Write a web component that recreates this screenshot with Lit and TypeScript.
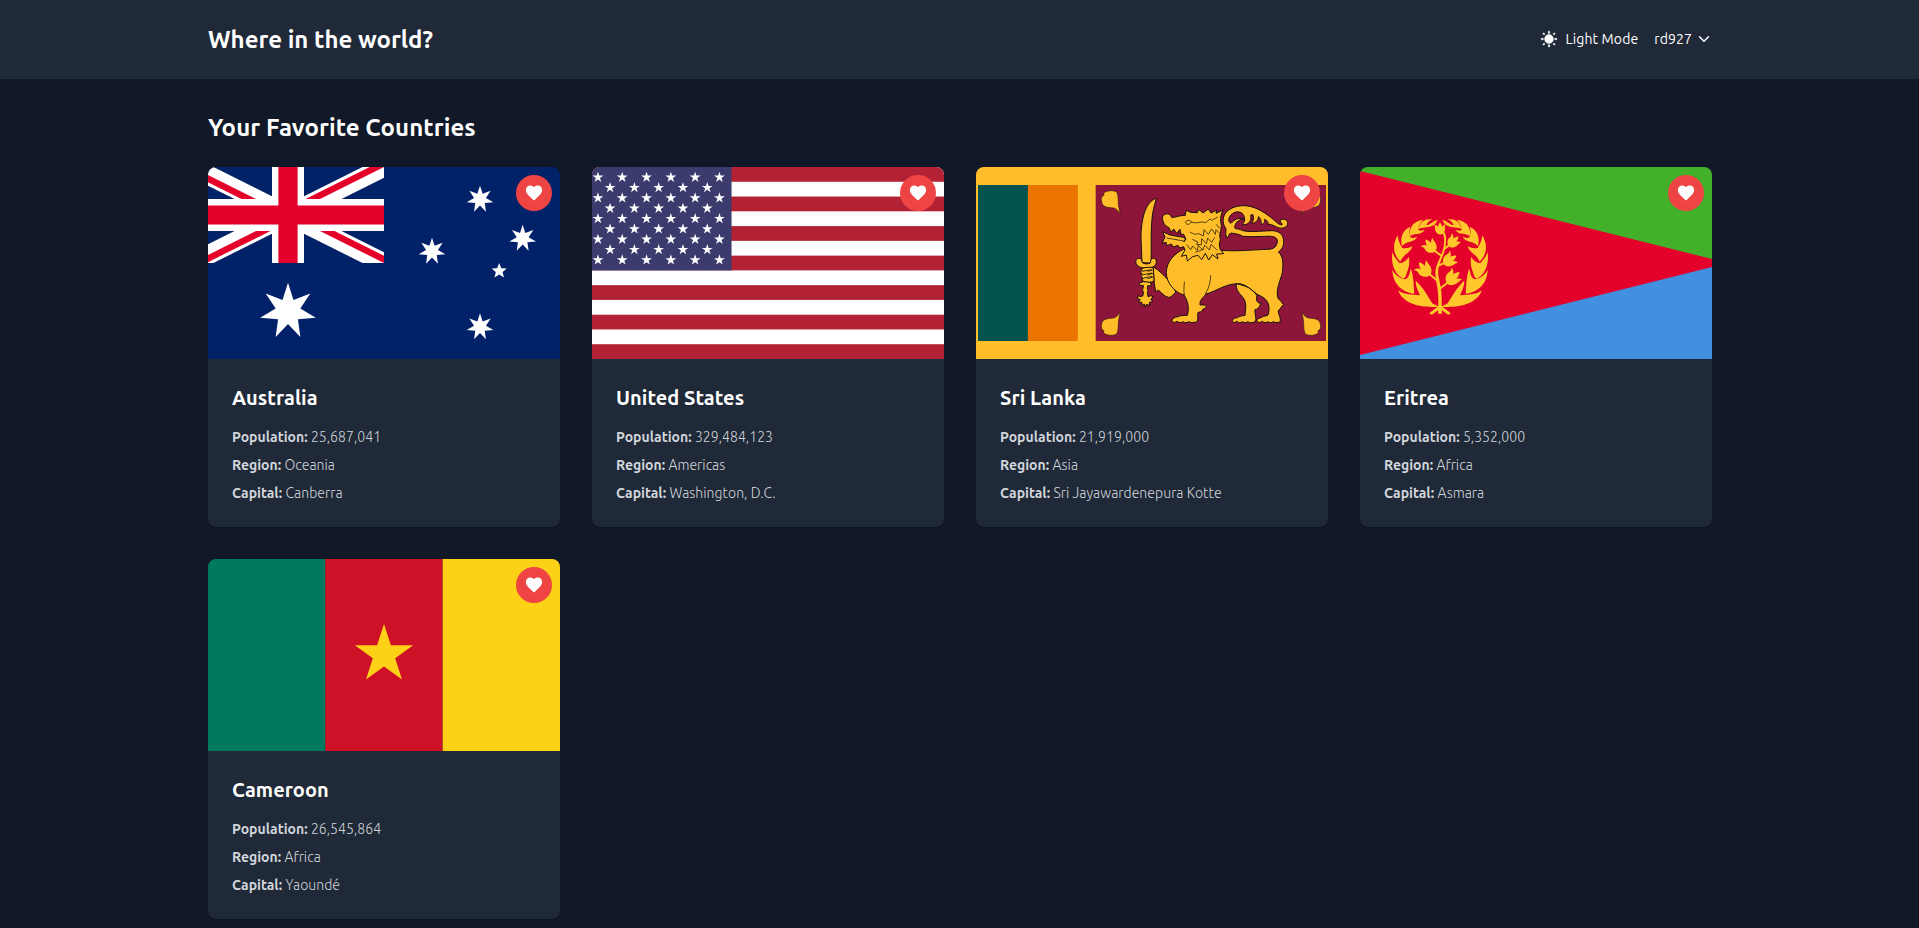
import { LitElement, html, css, svg, SVGTemplateResult } from "lit";
import { customElement, property } from "lit/decorators.js";

/** Points of a regular star polygon whose first tip points up. */
function starPoints(cx: number, cy: number, r: number, tips = 5, ratio = 0.382): string {
  const pts: string[] = [];
  for (let i = 0; i < tips * 2; i++) {
    const rad = i % 2 ? r * ratio : r;
    const a = (Math.PI * i) / tips - Math.PI / 2;
    pts.push(`${(cx + rad * Math.cos(a)).toFixed(2)},${(cy + rad * Math.sin(a)).toFixed(2)}`);
  }
  return pts.join(" ");
}

/* All flags are drawn on a 1056 x 576 canvas. */

const australia = svg`
  <rect width="1056" height="576" fill="#012169"/>
  <g transform="translate(-48 0)">
    <clipPath id="canton"><path d="M0 0h576v288H0z"/></clipPath>
    <clipPath id="quarters"><path d="M288 144h288v144zv144H0zH0V0zV0h288z"/></clipPath>
    <g clip-path="url(#canton)">
      <path d="M0 0L576 288M576 0L0 288" stroke="#fff" stroke-width="57.6"/>
      <path d="M0 0L576 288M576 0L0 288" stroke="#e4002b" stroke-width="38.4" clip-path="url(#quarters)"/>
      <path d="M288 0v288M0 144h576" stroke="#fff" stroke-width="96"/>
      <path d="M288 0v288M0 144h576" stroke="#e4002b" stroke-width="57.6"/>
    </g>
    <g fill="#fff">
      <polygon points=${starPoints(288, 433, 85.5, 7, 0.444)}/>
      <polygon points=${starPoints(864, 97, 41, 7, 0.444)}/>
      <polygon points=${starPoints(720, 253, 41, 7, 0.444)}/>
      <polygon points=${starPoints(992, 214.5, 41, 7, 0.444)}/>
      <polygon points=${starPoints(864, 480, 41, 7, 0.444)}/>
      <polygon points=${starPoints(921.6, 312, 24, 5, 0.444)}/>
    </g>
  </g>`;

const usStars: string[] = [];
for (let row = 0; row < 9; row++) {
  const count = row % 2 ? 5 : 6;
  for (let i = 0; i < count; i++) {
    usStars.push(starPoints(17.8 + (row % 2 ? 36.4 : 0) + i * 72.9, 31 + row * 31, 17));
  }
}

const unitedStates = svg`
  <rect width="1056" height="576" fill="#fff"/>
  ${[0, 2, 4, 6, 8, 10, 12].map(
    (i) => svg`<rect y=${(i * 576) / 13} width="1056" height=${576 / 13} fill="#b22234"/>`
  )}
  <rect width="418.6" height="310.2" fill="#3c3b6e"/>
  ${usStars.map((p) => svg`<polygon points=${p} fill="#fff"/>`)}`;

const leaf =
  "M401 99C414 90 429 91 440 96C447 110 443 130 447 145L451 164C444 149 437 144 425 143C413 143 403 140 398 134C393 124 393 114 397 109L402 106Z";

const sriLanka = svg`
  <rect width="1056" height="576" fill="#ffbe29"/>
  <rect x="6" y="54" width="150" height="468" fill="#00534e"/>
  <rect x="155.500" y="54" width="150" height="468" fill="#eb7400"/>
  <rect x="359" y="54" width="691" height="468" fill="#8d153a"/>
  <g transform="translate(-18 -21)" fill="#ffbe29" stroke="#17100c" stroke-width="3" stroke-linejoin="round">
    <g stroke-width="1.500">
      <path d=${leaf}/>
      <path d=${leaf} transform="matrix(1 0 0 -1 0 618)"/>
      <path d=${leaf} transform="matrix(-1 0 0 1 1446 0)"/>
      <path d=${leaf} transform="matrix(-1 0 0 -1 1446 618)"/>
    </g>
    <path d="M549 320C568 331 583 347 594 360L618 396C610 402 607 409 599 412C588 413 578 402 566 391C562 390 561 394 557 395L553 370Z"/>
    <path d="M799 370C797 388 806 398 815 408C826 420 828 430 827 444L825 466C812 468 806 469 803 473C792 473 786 479 787 485C791 488 796 488 800 484C806 489 812 489 816 485C822 489 828 489 833 485C841 490 848 489 857 484C860 472 853 460 855 449C862 449 865 441 869 440C867 436 874 432 873 430C861 430 857 420 861 407L845 385Z"/>
    <path d="M640 268C615 280 589 304 589 338C589 370 615 397 642 405C655 424 658 446 652 466C638 467 631 466 625 470C612 471 604 478 606 485C611 488 616 488 621 484C627 489 634 489 639 485C645 489 651 489 656 485C663 489 673 488 682 485C685 474 682 465 684 457C694 457 699 451 699 447C706 447 706 440 710 438C705 434 698 435 690 435C688 420 700 413 708 402C738 394 764 373 800 371C826 371 845 389 861 403C882 411 897 423 897 444C897 457 896 463 892 467C883 467 877 470 874 473C863 474 858 481 862 485C867 489 872 488 877 484C882 489 888 489 893 485C899 489 905 489 910 485C917 489 925 488 931 485C933 470 923 461 925 451C932 448 932 441 941 433C932 428 935 421 925 417C915 393 931 362 937 338C940 315 941 289 925 276C935 269 942 258 941 243C940 223 927 213 907 212C880 212 850 217 823 213C812 211 808 205 799 207C790 204 795 195 799 188C806 180 813 178 822 177C805 171 792 180 783 190C770 184 777 165 792 158C806 152 818 158 821 166C826 176 825 184 817 194C836 196 846 182 842 166L848 163C853 172 850 183 845 190C858 189 866 180 865 170C874 176 874 187 873 193C882 192 886 187 883 178C892 180 896 188 894 194C904 190 912 199 925 203C941 208 954 200 953 188C951 177 936 174 930 182C931 189 938 189 936 195C923 194 911 177 894 166C870 148 846 137 820 137C796 138 779 144 766 160C756 174 758 194 768 206C768 216 765 223 771 234C778 229 774 222 784 219C795 222 807 221 818 229C842 231 866 229 887 229C909 227 923 232 922 244C921 258 913 268 893 268C855 269 800 275 752 271Z"/>
    <path d="M646 166L648 151L662 157L682 158L686 148L699 159L715 147L723 159L740 150L738 160L760 150C752 162 752 173 752 184L754 197L752 214L749 225L751 239L748 252L750 267L761 281L740 282L744 297L727 284L716 300L706 280L695 299L684 286L668 290L652 303L649 285L634 289L645 270L641 260L629 264L624 256L610 261L604 252L591 257L588 247L576 250L585 231L578 215L600 225L640 232C646 237 648 241 641 244L648 238L641 223L632 222L630 208L620 220L611 207L603 217L597 203C583 197 576 184 578 170C584 158 600 159 603 170C607 177 620 167 646 166Z"/>
    <g fill="none" stroke-width="2.200">
      <path d="M646 187C652 178 664 180 664 187C658 194 650 196 646 187ZM664 186C680 193 694 182 707 188L720 177L725 181L743 171M590 234L630 241L645 244M660 216L674 223L686 221L700 228L702 209L715 223L725 207L736 223L738 209L748 219M667 238L684 246L679 253L694 254L695 236L709 251L713 234L725 247L734 232M650 254L662 269L668 258L682 271L685 256L698 270L704 255L718 270L723 253L742 271M739 193L748 205M676 277L700 268"/>
      <path d="M643 405C640 390 643 377 643 365M722 346C722 366 716 386 706 402M800 371C828 370 845 391 861 404"/>
    </g>
    <path d="M559 115C529 124 513 170 513 236L516 308L543 309C545 265 540 190 551 145Z"/>
    <path d="M504 318C494 309 496 297 506 295C517 295 514 304 517 308C524 313 536 313 542 308C540 297 549 292 557 297C562 309 557 318 546 322C532 326 512 325 504 318Z"/>
    <path d="M514 326C525 322 540 320 550 324L552 362C542 370 526 368 516 361L518 354L512 348L517 342L511 336L516 331Z"/>
    <path d="M516 334L545 329M516 345L546 339M517 355L547 349M532 334L548 330M532 345L549 340M532 356L549 351" fill="none" stroke-width="2.500"/>
    <path d="M520 365L507 370L510 377L520 376C522 385 514 389 520 395L519 407L512 410L504 407L503 416L511 419L504 426L516 427L515 436L524 433L526 442L530 433L540 437L538 427L549 425L542 418L550 411L543 407L534 410L532 397C538 391 529 386 533 377L543 378V369L534 366Z"/>
  </g>`;

/** A three-pointed olive bud, base at (x, y), turned by the given angle. */
const bud = (x: number, y: number, angle: number, s = 1) => svg`
  <path transform=${`translate(${x} ${y}) rotate(${angle}) scale(${s})`}
    d="M-3 3C-15 -1 -21 -13 -18 -24C-18 -29 -21 -33 -23 -36C-13 -34 -8 -30 -7 -25C-6 -31 -3 -38 1 -43C5 -37 8 -31 8 -24C11 -29 14 -32 21 -34C18 -27 19 -21 18 -15C16 -4 9 2 3 3Z"/>`;

const wreathHalf = svg`
  <path d="M266 440C216 444 160 434 144 391C160 404 183 404 210 406C203 391 197 379 197 362C220 382 234 410 247 430Z"/>
  <path d="M193 401C157 397 128 372 127 329C136 345 146 353 165 358C178 353 178 340 182 326C191 346 191 373 193 401Z"/>
  <path d="M160 356C137 346 122 316 127 277C133 292 141 300 149 310C162 307 171 301 176 290C183 315 171 334 166 352Z"/>
  <path d="M151 305C129 283 126 254 143 226C145 241 149 253 157 264C168 266 178 264 187 259C183 279 160 281 151 305Z"/>
  <path d="M156 259C150 232 157 211 181 200C177 211 178 223 181 232C189 235 196 234 202 229C195 250 168 241 156 259Z"/>
  <path d="M180 229C176 204 190 182 219 180C210 190 206 199 205 209C211 214 218 212 224 208C215 229 194 217 180 229Z"/>
  <path d="M206 206C211 185 224 175 247 178C238 183 232 188 229 195C240 195 246 184 263 179C254 205 230 199 206 206Z"/>
  <path d="M266 438L238 459L245 465L270 446Z"/>`;

const eritrea = svg`
  <rect width="1056" height="288" fill="#43b02a"/>
  <rect y="288" width="1056" height="288" fill="#418fde"/>
  <path d="M-48 0L1104 288L-48 576z" fill="#e4002b"/>
  <g transform="translate(-30 -21)" fill="#ffc72c">
    ${wreathHalf}
    <g transform="matrix(-1 0 0 1 540 0)">${wreathHalf}</g>
    <path d="M264 461L265 425C266 396 260 376 257 350C251 318 274 294 280 264C284 243 284 228 276 217L282 214C291 229 289 246 286 265C280 292 261 317 265 346C272 380 276 398 275 425L276 461Z"/>
    <path d="M262 362L238 342M270 385L296 366M263 318L285 308M275 288L252 271M284 266L300 254" fill="none" stroke="#ffc72c" stroke-width="6"/>
    ${bud(236, 344, -40, 1.1)}
    ${bud(252, 273, -38, 1)}
    ${bud(271, 221, -3, 0.8)}
    ${bud(299, 257, 42, 0.9)}
    ${bud(284, 311, 54, 1)}
    ${bud(294, 368, 46, 1.1)}
  </g>`;

const cameroon = svg`
  <rect width="352" height="576" fill="#007a5e"/>
  <rect x="352" width="352" height="576" fill="#ce1126"/>
  <rect x="704" width="352" height="576" fill="#fcd116"/>
  <polygon points=${starPoints(528, 287, 92)} fill="#fcd116"/>`;

interface Country {
  name: string;
  population: string;
  region: string;
  capital: string;
  flag: SVGTemplateResult;
}

const countries: Country[] = [
  { name: "Australia", population: "25,687,041", region: "Oceania", capital: "Canberra", flag: australia },
  { name: "United States", population: "329,484,123", region: "Americas", capital: "Washington, D.C.", flag: unitedStates },
  { name: "Sri Lanka", population: "21,919,000", region: "Asia", capital: "Sri Jayawardenepura Kotte", flag: sriLanka },
  { name: "Eritrea", population: "5,352,000", region: "Africa", capital: "Asmara", flag: eritrea },
  { name: "Cameroon", population: "26,545,864", region: "Africa", capital: "Yaoundé", flag: cameroon },
];

@customElement("country-card")
export class CountryCard extends LitElement {
  @property({ attribute: false }) country!: Country;

  static styles = css`
    :host {
      display: block;
      position: relative;
      overflow: hidden;
      border-radius: 8px;
      background: #1f2937;
      box-shadow: 0 1px 3px rgb(0 0 0 / 0.1), 0 1px 2px -1px rgb(0 0 0 / 0.1);
    }
    .flag {
      display: block;
      width: 100%;
      height: 192px;
    }
    .like {
      position: absolute;
      top: 8px;
      right: 8px;
      display: flex;
      padding: 8px;
      border: 0;
      border-radius: 50%;
      background: #ef4444;
      color: #fff;
    }
    .heart {
      display: block;
      width: 20px;
      height: 20px;
    }
    .body {
      padding: 25px 24px 24px;
    }
    .name {
      margin: 0 0 15px;
      font-size: 20px;
      line-height: 28px;
      font-weight: 600;
      letter-spacing: 0.04px;
      color: #fff;
    }
    .facts {
      display: grid;
      gap: 8px;
      margin: 0;
      font-size: 14px;
      line-height: 20px;
      font-weight: 300;
      letter-spacing: 0.04px;
      color: #d1d5db;
    }
    .fact {
      white-space: nowrap;
    }
    .label {
      display: inline;
      font-weight: 600;
      letter-spacing: 0;
    }
    .value {
      display: inline;
      margin: 0;
    }
  `;

  private fact(label: string, value: string) {
    return html`<div class="fact"><dt class="label">${label}:</dt> <dd class="value">${value}</dd></div>`;
  }

  render() {
    const c = this.country;
    return html`
      <svg class="flag" viewBox="0 0 1056 576" preserveAspectRatio="none" role="img" aria-label=${c.name}>${c.flag}</svg>
      <button class="like" aria-pressed="true">
        <svg class="heart" viewBox="0 0 512 512" fill="currentColor">
          <path d="M256 448l-30.164-27.211C118.718 322.442 48 258.61 48 179.095 48 114.221 97.918 64 162.4 64c36.399 0 70.717 16.742 93.6 43.947C278.882 80.742 313.199 64 349.6 64 414.082 64 464 114.221 464 179.095c0 79.516-70.719 143.348-177.836 241.694L256 448z"/>
        </svg>
      </button>
      <div class="body">
        <h3 class="name">${c.name}</h3>
        <dl class="facts">
          ${this.fact("Population", c.population)} ${this.fact("Region", c.region)} ${this.fact("Capital", c.capital)}
        </dl>
      </div>
    `;
  }
}

@customElement("app-root")
export class AppRoot extends LitElement {
  static styles = css`
    :host {
      display: block;
      min-height: 100vh;
      background: #111827;
      color: #fff;
      font-family: Ubuntu, "Noto Sans", "Open Sans", sans-serif;
    }
    .header {
      background: #1f2937;
      box-shadow: 0 1px 2px rgb(0 0 0 / 0.05);
    }
    .container {
      box-sizing: border-box;
      max-width: 1536px;
      margin: 0 auto;
      padding: 0 15.5px 0 16.5px;
    }
    .bar {
      display: flex;
      align-items: center;
      justify-content: space-between;
      height: 79px;
    }
    .title {
      margin: 0;
      font-size: 24px;
      line-height: 32px;
      font-weight: 600;
    }
    .section {
      letter-spacing: 0.08px;
    }
    .actions {
      display: flex;
      align-items: center;
      gap: 16px;
      padding-bottom: 1px;
      font-size: 14px;
      line-height: 20px;
    }
    .action {
      display: flex;
      align-items: center;
    }
    .theme {
      gap: 8px;
      letter-spacing: 0.12px;
    }
    .user {
      gap: 4px;
      letter-spacing: 0.1px;
    }
    .sun {
      width: 18px;
      height: 18px;
    }
    .chevron {
      width: 16px;
      height: 16px;
    }
    .main {
      padding-top: 33px;
    }
    .grid {
      display: grid;
      grid-template-columns: repeat(4, 1fr);
      gap: 32px;
      margin-top: 23px;
    }
  `;

  render() {
    return html`
      <header class="header">
        <div class="container bar">
          <h1 class="title">Where in the world?</h1>
          <nav class="actions">
            <div class="action theme">
              <svg class="sun" viewBox="0 0 512 512" fill="currentColor">
                <path d="M277.3 32h-42.700v64h42.700V32zm129.100 43.700L368 114.100l29.900 29.900 38.400-38.400-29.900-29.900zm-300.800 0l-29.900 29.900 38.400 38.400 29.900-29.900-38.400-38.400zM256 128c-70.400 0-128 57.600-128 128s57.600 128 128 128 128-57.600 128-128-57.600-128-128-128zm224 106.700h-64v42.700h64v-42.700zm-384 0H32v42.700h64v-42.700zM397.900 368L368 397.900l38.400 38.400 29.900-29.900-38.400-38.400zm-283.800 0l-38.400 38.400 29.900 29.900 38.400-38.400-29.900-29.900zm163.200 48h-42.700v64h42.700v-64z"
                  stroke="currentColor" stroke-width="10"/>
              </svg>
              <span>Light Mode</span>
            </div>
            <div class="action user">
              <span>rd927</span>
              <svg class="chevron" viewBox="0 0 512 512" fill="none" stroke="currentColor" stroke-width="48" stroke-linecap="round" stroke-linejoin="round">
                <path d="M112 184l144 144 144-144"/>
              </svg>
            </div>
          </nav>
        </div>
      </header>
      <main class="container main">
        <h2 class="title section">Your Favorite Countries</h2>
        <div class="grid">
          ${countries.map((c) => html`<country-card .country=${c}></country-card>`)}
        </div>
      </main>
    `;
  }
}
